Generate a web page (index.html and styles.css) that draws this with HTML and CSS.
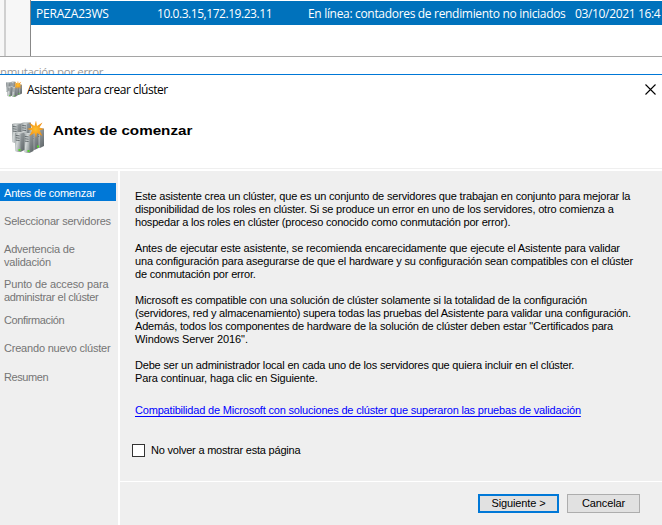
FILE: index.html
```html
<!DOCTYPE html>
<html lang="es">
<head>
<meta charset="utf-8">
<title>Asistente para crear clúster</title>
<link rel="stylesheet" href="styles.css">
</head>
<body>
<section class="manager">
  <div class="gutter"></div>
  <div class="tree"></div>
  <div class="grid">
    <div class="row"><span class="name">PERAZA23WS</span><span class="ip">10.0.3.15,172.19.23.11</span><span class="state">En línea: contadores de rendimiento no iniciados</span><span class="date">03/10/2021 16:4</span></div>
  </div>
</section>
<div class="behind"><span>nmutación por error</span></div>
<main class="dialog">
  <header class="titlebar">
    <svg class="icon-small" viewBox="0 0 32 32"><use href="#cluster"/></svg>
    <span class="title">Asistente para crear clúster</span>
    <svg class="close" viewBox="0 0 11 11"><path d="M.5.5l10 10M10.500.5l-10 10" stroke="#000" stroke-width="1.1"/></svg>
  </header>
  <div class="banner">
    <svg class="icon-large" viewBox="0 0 32 32">
      <defs>
        <linearGradient id="front" y2=".6"><stop offset="0" stop-color="#8b9294"/><stop offset=".5" stop-color="#d3d8d8"/><stop offset="1" stop-color="#9aa1a3"/></linearGradient>
        <linearGradient id="side" x2="1" y2="1"><stop offset="0" stop-color="#b4babc"/><stop offset="1" stop-color="#5d6467"/></linearGradient>
        <radialGradient id="spark"><stop offset="0" stop-color="#ffc02e"/><stop offset="1" stop-color="#f08c14"/></radialGradient>
        <g id="tower">
          <path d="M0 1L4 0l5.500.6v17.400L5.500 20 0 19z" fill="url(#side)"/>
          <path d="M0 1l5.500.6V20L0 19z" fill="url(#front)"/>
          <path d="M.8 3.500l3.800.4M.8 5.800l3.800.4M.8 8.100l3.800.4" stroke="#596164" stroke-width=".9"/>
          <path d="M0 1L4 0l5.500.6-4 1z" fill="#d3d7d7"/>
        </g>
      </defs>
      <g id="cluster">
        <use href="#tower" x="9.500" y="1"/>
        <use href="#tower" x="0" y="2"/>
        <use href="#tower" x="22.500" y="7"/>
        <use href="#tower" x="17" y="9"/>
        <use href="#tower" x="12" y="12"/>
        <use href="#tower" x="3" y="11"/>
        <path d="M6.500 28h2v2h-2zM15.500 29h2v2h-2zM25 24.500h2v2h-2z" fill="#55d52b"/>
        <path d="M24-.5l1 5.500L30.500 1.500 27.500 6.500l4.500 1.500-4.500 1.500 3 5.500-5.500-3L24 17l-1.500-5-5 3 2.500-5.500L15 8l5-1.500-3-5 5.500 3.500z" fill="url(#spark)"/>
      </g>
    </svg>
    <h1>Antes de comenzar</h1>
  </div>
  <div class="body">
    <nav class="steps">
      <div class="step current">Antes de comenzar</div>
      <div class="step s2">Seleccionar servidores</div>
      <div class="step s3">Advertencia de<br>validación</div>
      <div class="step s4"><span class="s4-first">Punto de acceso para</span><br><span class="s4-second">administrar el clúster</span></div>
      <div class="step s5">Confirmación</div>
      <div class="step s6">Creando nuevo clúster</div>
      <div class="step s7">Resumen</div>
    </nav>
    <div class="main">
      <section class="content">
        <p><span class="l1">Este asistente crea un clúster, que es un conjunto de servidores que trabajan en conjunto para mejorar la</span><br>
        <span class="l2">disponibilidad de los roles en clúster. Si se produce un error en uno de los servidores, otro comienza a</span><br>
        <span class="l3">hospedar a los roles en clúster (proceso conocido como conmutación por error).</span></p>
        <p><span class="l4">Antes de ejecutar este asistente, se recomienda encarecidamente que ejecute el Asistente para validar</span><br>
        <span class="l5">una configuración para asegurarse de que el hardware y su configuración sean compatibles con el clúster</span><br>
        <span class="l6">de conmutación por error.</span></p>
        <p><span class="l7">Microsoft es compatible con una solución de clúster solamente si la totalidad de la configuración</span><br>
        <span class="l8">(servidores, red y almacenamiento) supera todas las pruebas del Asistente para validar una configuración.</span><br>
        <span class="l9">Además, todos los componentes de hardware de la solución de clúster deben estar "Certificados para</span><br>
        <span class="l10">Windows Server 2016".</span></p>
        <p><span class="l11">Debe ser un administrador local en cada uno de los servidores que quiera incluir en el clúster.</span><br>
        <span class="l12">Para continuar, haga clic en Siguiente.</span></p>
        <a class="link" href="#">Compatibilidad de Microsoft con soluciones de clúster que superaron las pruebas de validación</a>
        <label class="check"><input type="checkbox"><span>No volver a mostrar esta página</span></label>
      </section>
      <footer class="actions"><button class="primary">Siguiente &gt;</button><button>Cancelar</button></footer>
    </div>
  </div>
</main>
</body>
</html>
```
FILE: styles.css
```css
* { box-sizing: border-box; }
body { margin: 0; width: 662px; height: 525px; overflow: hidden; background: #fff; font: 11px/13px "Liberation Sans", sans-serif; color: #000; white-space: nowrap; }
.manager { display: flex; height: 57px; border-bottom: 1px solid #a5a5a5; font: 12px/24px "Open Sans", "Noto Sans", sans-serif; }
.gutter { width: 6px; background: #f7f7f7; border-right: 2px solid #d0d0d0; }
.tree { width: 25px; background: #f7f7f7; border-right: 1px solid #888; }
.grid { flex: 1; padding-top: 1px; overflow: hidden; }
.row { display: flex; height: 24px; background: #0072bc; color: #fff; padding: 1px 0 0 5px; }
.name { width: 121px; letter-spacing: -.2px; }
.ip { width: 151px; letter-spacing: -.45px; }
.state { width: 267px; letter-spacing: -.32px; }
.date { letter-spacing: -.35px; }
.behind { height: 17px; overflow: hidden; color: #999; font: 11.5px/16px "Open Sans", sans-serif; letter-spacing: -.35px; padding-top: 7px; }
.dialog { height: 451px; display: flex; flex-direction: column; border-top: 1px solid #0078d7; }
.titlebar { height: 30px; display: flex; align-items: center; padding: 0 6px; font: 12px/16px "Open Sans", sans-serif; letter-spacing: -.44px; }
.icon-small { width: 16px; height: 16px; margin-top: -2px; }
.title { margin-left: 5px; flex: 1; }
.close { width: 11px; height: 11px; margin-top: -2px; }
.banner { height: 64px; display: flex; padding: 16px 0 0 12px; border-bottom: 1px solid #efefef; }
.icon-large { width: 32px; height: 32px; }
h1 { margin: 2px 0 0 9px; font: bold 13.300px/16px "Liberation Sans", sans-serif; transform: scaleX(1.143); transform-origin: left; }
.body { flex: 1; margin-top: 2px; display: flex; }
.steps { width: 120px; background: #efefef; border-right: 2px solid #fff; padding-top: 12px; color: #757575; letter-spacing: -.2px; }
.step { padding-left: 4px; margin-right: 2px; }
.current { height: 18px; padding-top: 4px; background: #0078d7; color: #fff; }
.s2 { margin-top: 14px; }
.s3 { margin-top: 15px; }
.s4 { margin-top: 9px; }
.s4-first { letter-spacing: -.13px; }
.s4-second { letter-spacing: -.32px; }
.s5 { margin-top: 10px; letter-spacing: -.38px; }
.s6 { margin-top: 15px; }
.s7 { margin-top: 16px; letter-spacing: -.4px; }
.main { flex: 1; display: flex; flex-direction: column; background: #efefef; }
.content { height: 310px; padding: 19px 0 0 15px; }
.content p { margin: 0 0 13px; }
.l1 { letter-spacing: -.17px; }
.l2, .l3 { letter-spacing: -.19px; }
.l4, .l7 { letter-spacing: -.17px; }
.l5 { letter-spacing: -.17px; }
.l8 { letter-spacing: -.21px; }
.l6, .l9, .l11 { letter-spacing: -.185px; }
.l10 { letter-spacing: -.08px; }
.l12 { letter-spacing: -.13px; }
.link { display: block; width: max-content; margin-top: 19px; color: #00f; letter-spacing: -.19px; text-underline-offset: 2px; }
.check { display: flex; align-items: center; margin: 27px 0 0 -3px; letter-spacing: -.21px; }
.check input { appearance: none; width: 13px; height: 13px; margin: 0 6px 0 0; border: 1px solid #333; background: #fff; }
.actions { flex: 1; display: flex; justify-content: flex-end; gap: 8px; padding: 12px 22px 0 0; border-top: 1px solid #fff; }
button { width: 73px; height: 19px; padding: 0; border: 1px solid #adadad; background: #e1e1e1; font: inherit; letter-spacing: -.12px; }
.primary { width: 81px; border: 2px solid #0078d7; }
```
